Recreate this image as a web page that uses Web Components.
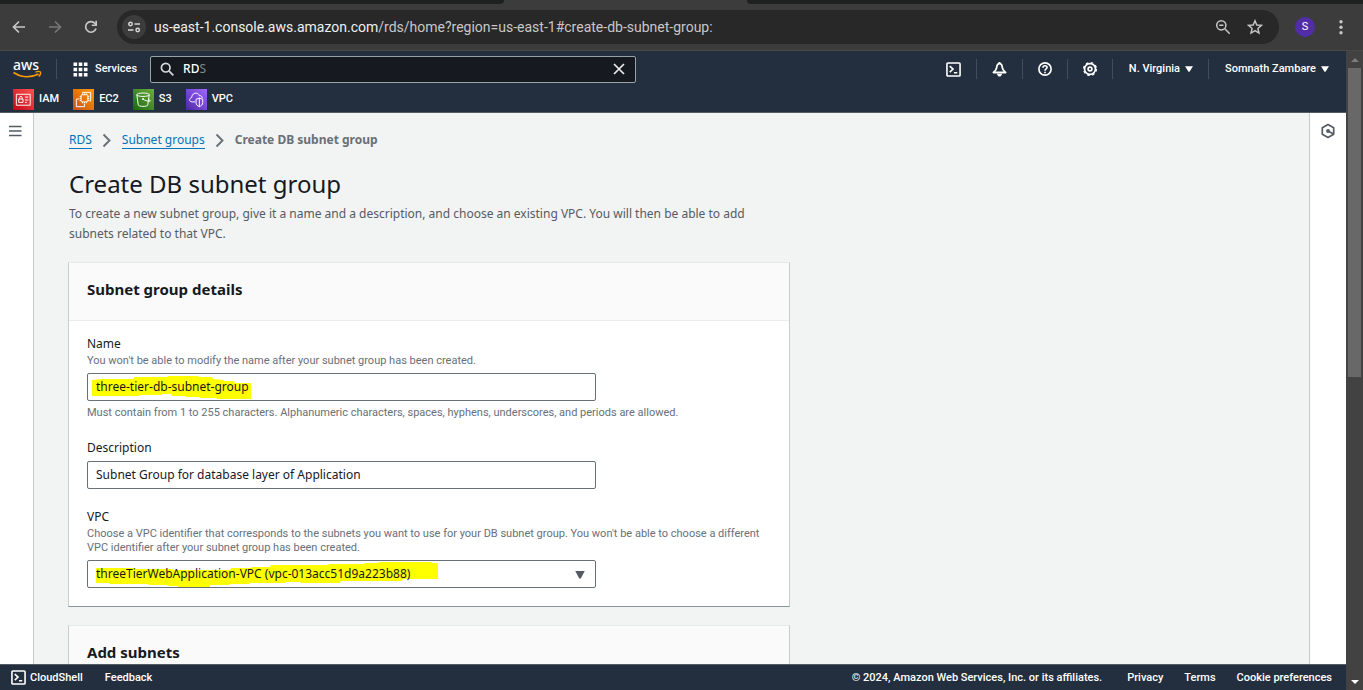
<!DOCTYPE html>
<html lang="en">
<head>
<meta charset="utf-8">
<title>Create DB subnet group</title>
<style>
  html, body { height: 100%; }
  body { margin: 0; overflow: hidden; font-family: "Noto Sans", "Open Sans", sans-serif; font-size: 12px; line-height: 20px; color: #16191f; --ui: Roboto, "Noto Sans", sans-serif; }
</style>
</head>
<body>
<console-window></console-window>

<template id="t-window">
  <style>
    :host { display: flex; flex-direction: column; height: 100vh; }
    .view { flex: 1; min-height: 0; display: grid; grid-template-columns: minmax(0, 1fr) 17px; }
    .console { display: flex; flex-direction: column; min-height: 0; }
    .middle { flex: 1; min-height: 0; display: grid; grid-template-columns: 33px minmax(0, 1fr) 36px; background: #fff; }
    main { border: 1px solid #c5c9c9; border-width: 0 1px; background: #f2f3f3; padding: 17px 36px 0 34px; overflow: hidden; }
    .intro { padding-left: 1px; }
    .side { padding-top: 10px; display: flex; justify-content: center; align-items: flex-start; }
    .side.left { padding-right: 4px; }
    .side button { border: 0; background: none; padding: 0; width: 16px; height: 16px; color: #545b64; }
    h1 { margin: 16px 0 0; font-size: 24px; line-height: 36px; font-weight: 400; }
    p { margin: 2px 0 18px; max-width: 700px; color: #545b64; }
    .stack { display: grid; gap: 18px; max-width: 722px; }
    .fields { display: grid; gap: 18px; }
  </style>
  <browser-bar></browser-bar>
  <div class="view">
    <div class="console">
      <aws-header></aws-header>
      <div class="middle">
        <div class="side left"><button aria-label="Open navigation"><ui-icon name="menu"></ui-icon></button></div>
        <main>
          <div class="intro">
            <crumb-trail></crumb-trail>
            <h1>Create DB subnet group</h1>
            <p>To create a new subnet group, give it a name and a description, and choose an existing VPC. You will then be able to add subnets related to that VPC.</p>
          </div>
          <div class="stack">
            <panel-card>
              <span slot="title">Subnet group details</span>
              <div class="fields">
                <form-field label="Name" hint="You won't be able to modify the name after your subnet group has been created."
                  note="Must contain from 1 to 255 characters. Alphanumeric characters, spaces, hyphens, underscores, and periods are allowed."
                  value="three-tier-db-subnet-group" marker="4,6 14,5 45,5 46,3 79,3 80,2 110,2 111,3 124,3 125,5 135,6 136,7 146,7 147,9 163,9 163,25 129,25 128,24 112,24 111,23 98,23 97,22 84,22 83,20 74,20 73,21 52,21 51,22 4,22"></form-field>
                <form-field label="Description" value="Subnet Group for database layer of Application"></form-field>
                <form-field select label="VPC" hint="Choose a VPC identifier that corresponds to the subnets you want to use for your DB subnet group. You won't be able to choose a different VPC identifier after your subnet group has been created."
                  value="threeTierWebApplication-VPC (vpc-013acc51d9a223b88)" marker="8,7 47,7 48,8 84,8 85,9 142,9 143,7 163,7 164,6 182,6 183,4 240,4 241,3 276,3 277,2 290,2 291,1 344,1 344,2 350,2 350,18 315,18 314,20 253,20 252,22 213,22 212,21 198,21 197,22 162,22 161,23 142,23 141,24 122,24 121,26 90,26 89,25 80,25 79,24 61,24 60,23 22,23 21,22 8,22"></form-field>
              </div>
            </panel-card>
            <panel-card>
              <span slot="title">Add subnets</span>
            </panel-card>
          </div>
        </main>
        <div class="side"><button aria-label="Open tools"><ui-icon name="hex"></ui-icon></button></div>
      </div>
      <console-footer></console-footer>
    </div>
    <page-scroll></page-scroll>
  </div>
</template>

<template id="t-browser">
  <style>
    :host { display: block; background: #3c3c3c; border-bottom: 1px solid #484848; font-family: Roboto, sans-serif; color: #c7c7c7; }
    .tabs { display: flex; height: 4px; background: #3c3c3c; }
    .tabs i { background: #1f2020; }
    .tabs i:first-child { width: 37%; border-bottom-right-radius: 6px; }
    .tabs b { width: 243px; }
    .tabs i:last-child { flex: 1; border-bottom-left-radius: 6px; }
    .bar { display: flex; align-items: center; height: 46px; padding: 0 14px 0 11px; }
    button { border: 0; background: none; padding: 0; color: inherit; display: grid; place-items: center; flex: none; }
    .nav { width: 16px; height: 16px; margin-right: 20px; }
    .nav.last { margin-right: 18px; }
    .dim { color: #777; }
    .pill { flex: 1; display: flex; align-items: center; height: 34px; border-radius: 17px; background: #282828; padding: 0 16px 0 5px; }
    .site { width: 24px; height: 24px; border-radius: 50%; background: #3c3c3c; margin-right: 8px; }
    .url { flex: 1; font-size: 14px; line-height: 20px; outline: 0; white-space: nowrap; color: #c7c7c7; }
    .url span { color: #f0f0f0; }
    .pill button + button { margin-left: 16px; }
    .avatar { width: 20px; height: 20px; border-radius: 50%; background: #512da8; color: #fff; font: 11px/20px Roboto, sans-serif; margin: 0 18px 0 16px; }
  </style>
  <div class="tabs"><i></i><b></b><i></i></div>
  <div class="bar">
    <button class="nav" aria-label="Back"><ui-icon name="back"></ui-icon></button>
    <button class="nav dim" aria-label="Forward"><ui-icon name="forward"></ui-icon></button>
    <button class="nav last" aria-label="Reload"><ui-icon name="reload"></ui-icon></button>
    <div class="pill">
      <button class="site" aria-label="Site information"><ui-icon name="tune"></ui-icon></button>
      <div class="url" role="textbox" aria-label="Address" contenteditable="true" spellcheck="false"><span>us-east-1.console.aws.amazon.com</span>/rds/home?region=us-east-1#create-db-subnet-group:</div>
      <button aria-label="Zoom"><ui-icon name="zoomout"></ui-icon></button>
      <button aria-label="Bookmark"><ui-icon name="star"></ui-icon></button>
    </div>
    <button class="avatar" aria-label="Profile">S</button>
    <button aria-label="Browser menu"><ui-icon name="dots"></ui-icon></button>
  </div>
</template>

<template id="t-header">
  <style>
    :host { display: block; height: 61px; background: #232f3e; border-bottom: 1px solid #545b64; color: #fff; font: 500 11px/20px var(--ui); }
    .top { display: flex; align-items: center; height: 36px; padding: 0 17px 0 13px; }
    a { color: inherit; text-decoration: none; }
    .logo { display: block; height: 22px; margin-right: 14px; }
    .logo svg { display: block; overflow: visible; }
    button { border: 0; background: none; color: inherit; font: inherit; padding: 0; display: flex; align-items: center; }
    hr { width: 1px; height: 20px; margin: 0; border: 0; background: #414d5c; flex: none; }
    .services { gap: 7px; margin: 0 13px 0 16px; }
    .search { flex: 0 1 484px; height: 25px; border: 1px solid #95a5a6; border-radius: 2px; background: #161a20; display: flex; align-items: center; padding: 0; min-width: 0; }
    .search ui-icon { margin: 0 9px; }
    input { field-sizing: content; min-width: 0; border: 0; outline: 0; padding: 0; background: none; color: #fff; font: 500 12px/20px "Noto Sans", sans-serif; }
    .ghost { flex: 1; color: #7b8a8e; font: 12px/20px "Noto Sans", sans-serif; }
    .tools { margin-left: auto; display: flex; align-items: center; }
    .tools .ic { padding: 0 15px; }
    .tools .drop { gap: 5px; padding: 0 15px 0 16px; }
    .tools .drop:last-child { padding-right: 0; }
    nav { display: flex; gap: 14px; padding-left: 13px; height: 24px; }
    nav a { display: flex; align-items: center; gap: 5px; }
  </style>
  <div class="top">
    <a class="logo" href="#home" aria-label="AWS home"><svg width="29" height="22" viewBox="0 0 29 22"><text x="0" y="12" font-family="Noto Sans, sans-serif" font-weight="500" font-size="14" fill="#fff">aws</text><path d="M0.500 14.500c7.500 5 17 5.500 25 1.500" fill="none" stroke="#ff9900" stroke-width="1.700"/><path d="M22.500 14.200c2-.7 4.500-.8 5 0 .4.900-.5 3-1.800 4.300" fill="none" stroke="#ff9900" stroke-width="1.300"/></svg></a>
    <hr>
    <button class="services"><ui-icon name="grid"></ui-icon>Services</button>
    <div class="search"><ui-icon name="search"></ui-icon><input type="text" aria-label="Search services" value="RD"><span class="ghost">S</span><button aria-label="Clear search"><ui-icon name="close"></ui-icon></button></div>
    <div class="tools">
      <button class="ic" aria-label="CloudShell"><ui-icon name="shell"></ui-icon></button><hr>
      <button class="ic" aria-label="Notifications"><ui-icon name="bell"></ui-icon></button><hr>
      <button class="ic" aria-label="Support"><ui-icon name="help"></ui-icon></button><hr>
      <button class="ic" aria-label="Settings"><ui-icon name="gear"></ui-icon></button><hr>
      <button class="drop">N. Virginia<ui-icon name="caret"></ui-icon></button><hr>
      <button class="drop">Somnath Zambare<ui-icon name="caret"></ui-icon></button>
    </div>
  </div>
  <nav aria-label="Favorites">
    <a href="#iam"><ui-icon name="iam"></ui-icon>IAM</a>
    <a href="#ec2"><ui-icon name="ec2"></ui-icon>EC2</a>
    <a href="#s3"><ui-icon name="s3"></ui-icon>S3</a>
    <a href="#vpc"><ui-icon name="vpc"></ui-icon>VPC</a>
  </nav>
</template>

<template id="t-crumbs">
  <style>
    :host { display: block; }
    nav { display: flex; align-items: center; gap: 10px; color: #687078; }
    a { color: #0073bb; text-decoration: none; border-bottom: 1px solid #0073bb; line-height: 16px; }
    b { font-weight: 700; }
  </style>
  <nav aria-label="Breadcrumbs"><a href="#rds">RDS</a><ui-icon name="chevron"></ui-icon><a href="#groups">Subnet groups</a><ui-icon name="chevron"></ui-icon><b>Create DB subnet group</b></nav>
</template>

<template id="t-card">
  <style>
    :host { display: block; box-sizing: border-box; background: #fff; border: 1px solid #c8cdcd; border-top-color: #e6e9e9; border-bottom-color: #879596; }
    header { background: #fafafa; border-bottom: 1px solid #eaeded; padding: 15px 18px 20px; }
    h2 { margin: 0; font-size: 15px; line-height: 22px; font-weight: 700; }
    .body { padding: 13px 18px 18px; }
  </style>
  <header><h2><slot name="title"></slot></h2></header>
  <div class="body"><slot></slot></div>
</template>

<template id="t-field">
  <style>
    :host { display: block; }
    label { display: block; }
    .hint, .note { font: 11px/14px var(--ui); color: #687078; }
    .hint { padding-bottom: 2px; }
    .note { margin-top: 5px; }
    .hint:empty, .note:empty { display: none; }
    .control { position: relative; display: flex; box-sizing: border-box; max-width: 509px; height: 28px; margin-top: 3px; border: 1px solid #687078; border-radius: 2px; background: #fff; }
    svg.marker { position: absolute; left: 0; top: 0; overflow: visible; pointer-events: none; }
    input, select { position: relative; flex: 1; min-width: 0; appearance: none; border: 0; outline: 0; background: none; margin: 0; padding: 0 8px; font: 12px/20px "Noto Sans", sans-serif; color: #16191f; }
    .control ui-icon { position: absolute; right: 10px; top: 10px; color: #545b64; }
  </style>
  <label for="c"></label>
  <div class="hint" id="h"></div>
  <div class="control"><svg class="marker" width="1" height="1" aria-hidden="true"><polygon fill="#ffff00"/></svg></div>
  <div class="note"></div>
</template>

<template id="t-footer">
  <style>
    :host { display: flex; align-items: center; height: 25px; background: #232f3e; border-top: 1px solid #545b64; padding: 0 14px 0 11px; color: #fff; font: 500 11px/20px var(--ui); }
    a, button { color: inherit; font: inherit; text-decoration: none; border: 0; background: none; padding: 0; }
    button { display: flex; align-items: center; gap: 4px; margin-right: 22px; }
    .right { margin-left: auto; display: flex; gap: 21px; }
    .right span { margin-right: 4px; }
  </style>
  <button><ui-icon name="shell"></ui-icon>CloudShell</button>
  <a href="#feedback">Feedback</a>
  <div class="right"><span>© 2024, Amazon Web Services, Inc. or its affiliates.</span><a href="#privacy">Privacy</a><a href="#terms">Terms</a><a href="#cookies">Cookie preferences</a></div>
</template>

<template id="t-scroll">
  <style>
    :host { display: grid; grid-template-rows: 17px minmax(0, 1fr) 17px; background: #424242; justify-items: center; }
    i { width: 0; border: 4px solid transparent; align-self: center; }
    .up { border-bottom-color: #7d7d7d; border-top-width: 0; }
    .down { border-top-color: #fff; border-bottom-width: 0; }
    .thumb { width: 13px; height: 51%; background: #686868; }
  </style>
  <i class="up"></i><div class="thumb"></div><i class="down"></i>
</template>

<script>
const tile = (a, b, id, art) => [21, 21, 22, `<defs><linearGradient id="${id}" x1="0" y1="1" x2="1" y2="0"><stop stop-color="${a}"/><stop offset="1" stop-color="${b}"/></linearGradient></defs><rect width="22" height="22" fill="url(#${id})"/><g fill="none" stroke="#fff" stroke-width="1">${art}</g>`];
const ICONS = {
  back: [16, 16, 16, '<path d="M14 8H3M8 2.500 2.500 8 8 13.500" fill="none" stroke="currentColor" stroke-width="1.700"/>'],
  forward: [16, 16, 16, '<path d="M2 8h11M8 2.500 13.500 8 8 13.500" fill="none" stroke="currentColor" stroke-width="1.700"/>'],
  reload: [16, 16, 16, '<path d="M13 9.500A5.300 5.300 0 1 1 12 4.500l1.500 1.500" fill="none" stroke="currentColor" stroke-width="1.700"/><path d="M14 1.800V7H8.800V5.400h3.500V1.800z" fill="currentColor"/>'],
  tune: [16, 16, 16, '<g fill="none" stroke="#d5d5d5" stroke-width="1.500"><circle cx="4.500" cy="5" r="1.700"/><path d="M8.500 5H14M2 11h5.500"/><circle cx="11.700" cy="11" r="1.700"/></g>'],
  zoomout: [16, 16, 16, '<g fill="none" stroke="currentColor" stroke-width="1.500"><circle cx="6.300" cy="6.300" r="4.600"/><path d="m9.800 9.800 4.900 4.900M4.200 6.300h4.200"/></g>'],
  star: [16, 16, 16, '<path d="m8 1.700 1.800 4.300 4.600.4-3.500 3 1.100 4.600L8 11.600 4 14l1.100-4.600-3.500-3L6.200 6z" fill="none" stroke="currentColor" stroke-width="1.400"/>'],
  dots: [16, 16, 16, '<g fill="currentColor"><circle cx="8" cy="2.700" r="1.700"/><circle cx="8" cy="8.200" r="1.700"/><circle cx="8" cy="13.700" r="1.700"/></g>'],
  grid: [15, 15, 15, '<path d="M.5.500h3.600v3.600H.5zM5.700.500h3.600v3.600H5.700zM10.900.500h3.600v3.600h-3.600zM.5 5.700h3.600v3.600H.5zM5.700 5.700h3.600v3.600H5.700zM10.900 5.700h3.600v3.600h-3.600zM.5 10.900h3.600v3.600H.5zM5.700 10.900h3.600v3.600H5.700zM10.900 10.900h3.600v3.600h-3.600z" fill="#fff"/>'],
  search: [14, 14, 14, '<g fill="none" stroke="#d5dbdb" stroke-width="1.700"><circle cx="5.700" cy="5.700" r="4.300"/><path d="m8.900 8.900 4.400 4.400"/></g>'],
  close: [14, 14, 14, '<path d="m2 2 10 10M12 2 2 12" stroke="#eaeded" stroke-width="1.700"/>'],
  shell: [15, 15, 16, '<g fill="none" stroke="#fff" stroke-width="1.700"><rect x="1" y="1" width="14" height="14" rx="1"/><path d="m4 4.500 3.500 3L4 10.800M8.500 11.500H12"/></g>'],
  bell: [15, 15, 16, '<path d="M8 1.800C5.800 1.800 5.200 3.500 5 6c-.2 2-1.200 3.300-3.500 5.200h13C12.200 9.300 11.200 8 11 6c-.2-2.500-.8-4.200-3-4.200z" fill="none" stroke="#fff" stroke-width="1.900" stroke-linejoin="round"/><path d="M5.500 12.500h5v1.200L9 15.500H7l-1.500-1.800z" fill="#fff"/><path d="M7 0h2v2H7z" fill="#fff"/>'],
  help: [14, 14, 16, '<g fill="none" stroke="#fff" stroke-width="1.900"><circle cx="8" cy="8" r="7"/><path d="M5.700 6.500C5.700 3.500 10.300 3.700 10.300 6.300 10.300 8 8 7.800 8 10"/><path d="M8 11v1.800"/></g>'],
  gear: [14, 14, 16, '<g fill="none" stroke="#fff"><circle cx="8" cy="8" r="6.200" stroke-width="1.900"/><circle cx="8" cy="8" r="7.300" stroke-width="1.500" stroke-dasharray="2.870 2.870"/><circle cx="8" cy="8" r="2.200" stroke-width="1.900"/></g>'],
  caret: [8, 6, 8, '<path d="M0 .3h8L4.500 5.800h-1z" fill="#fff"/>', '0 0 8 6'],
  selectcaret: [10, 8, 10, '<path d="M.3 0h9.400L5.800 7.400H4.200z" fill="currentColor"/>', '0 0 10 8'],
  chevron: [10, 15, 10, '<path d="m1.500 1.500 6 6-6 6" fill="none" stroke="#687078" stroke-width="1.900"/>', '0 0 10 15'],
  menu: [16, 16, 16, '<path d="M2 3.500h12.500M2 8h12.500M2 12.500h12.500" stroke="currentColor" stroke-width="1.700"/>'],
  hex: [16, 16, 16, '<g fill="none" stroke="currentColor" stroke-width="1.700"><path d="m8 1.500 5.700 3.200v6.600L8 14.500l-5.700-3.200V4.700z" stroke-linejoin="round"/><path d="m8 8 5 2.700"/></g><circle cx="8" cy="8" r="1.900" fill="currentColor"/>'],
  iam: tile('#bd0816', '#ff5252', 'gi', '<path d="M3.500 5.500h14.500v11.500H3.500zM6 10.500h4.500v3.500H6zM7 10.500V9c0-1.700 2.500-1.700 2.500 0v1.500M12.500 8.500H16M12.500 11.500H16M12.500 14h2"/>'),
  ec2: tile('#c8511b', '#ff9900', 'ge', '<rect x="8.500" y="6" width="7" height="7.500" rx="1"/><path d="M10 4.500v1.500M12 4.500v1.500M14 4.500v1.500M10 13.500V15M12 13.500V15M14 13.500V15M7 8h1.500M7 10h1.500M7 12h1.500M15.500 8H17M15.500 10H17M15.500 12H17M9.500 3.500h9v9H17M6.500 10.500h-3v8h8.500V15.500"/>'),
  s3: tile('#1b660f', '#6cae3e', 'gs', '<ellipse cx="10.500" cy="6" rx="6.500" ry="1.800"/><path d="m4 6 1.500 10.500c0 2.300 10 2.300 10 0L17 6M10.500 10.500c2 1.500 4 2.300 7.500 2.300 1-.7-1-1.500-2-1.800"/><circle cx="10.500" cy="10.500" r=".7"/>'),
  vpc: tile('#4d27a8', '#a166ff', 'gv', '<path d="M9.500 13.500H6.500C3 13.500 3 9.500 6 9c0-5.500 7-6 8-2 2-.3 3 1 3 2.700M14 9.500l3.500 1.300v3.500c0 2-1.500 3.500-3.500 4.200-2-.7-3.500-2.200-3.500-4.200v-3.500zM14 9.500v9"/>')
};

class UiIcon extends HTMLElement {
  connectedCallback() {
    if (this.shadowRoot) return;
    const [w, h, s, art, box] = ICONS[this.getAttribute('name')];
    this.attachShadow({ mode: 'open' }).innerHTML =
      `<style>:host{display:inline-block;flex:none;line-height:0}svg{display:block}</style><svg width="${w}" height="${h}" viewBox="${box || `0 0 ${s} ${s}`}" aria-hidden="true">${art}</svg>`;
  }
}
customElements.define('ui-icon', UiIcon);

const fromTemplate = id => class extends HTMLElement {
  constructor() {
    super();
    this.attachShadow({ mode: 'open' }).append(document.getElementById(id).content.cloneNode(true));
  }
};

class FormField extends fromTemplate('t-field') {
  connectedCallback() {
    const $ = q => this.shadowRoot.querySelector(q);
    const value = this.getAttribute('value');
    $('label').textContent = this.getAttribute('label');
    $('.hint').textContent = this.getAttribute('hint') || '';
    $('.note').textContent = this.getAttribute('note') || '';
    if (this.hasAttribute('marker')) $('polygon').setAttribute('points', this.getAttribute('marker'));
    else $('svg.marker').remove();
    let control;
    if (this.hasAttribute('select')) {
      control = document.createElement('select');
      control.add(new Option(value));
      const caret = document.createElement('ui-icon');
      caret.setAttribute('name', 'selectcaret');
      $('.control').append(control, caret);
    } else {
      control = document.createElement('input');
      control.type = 'text';
      control.value = value;
      $('.control').append(control);
    }
    control.id = 'c';
    control.setAttribute('aria-describedby', 'h');
  }
}
customElements.define('form-field', FormField);
customElements.define('panel-card', fromTemplate('t-card'));
customElements.define('crumb-trail', fromTemplate('t-crumbs'));
customElements.define('browser-bar', fromTemplate('t-browser'));
customElements.define('aws-header', fromTemplate('t-header'));
customElements.define('console-footer', fromTemplate('t-footer'));
customElements.define('page-scroll', fromTemplate('t-scroll'));
customElements.define('console-window', fromTemplate('t-window'));
</script>
</body>
</html>
